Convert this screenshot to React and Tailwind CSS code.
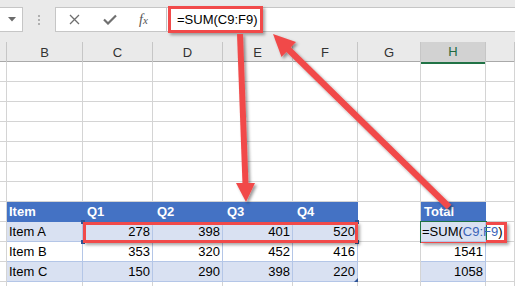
import React from 'react';

const COLS = 'grid-cols-[7px_76px_70px_70px_70px_65px_63px_65px_29px]';
const LETTERS = ['', 'B', 'C', 'D', 'E', 'F', 'G', 'H', ''];

const DATA = [
  ['Item A', 278, 398, 401, 520],
  ['Item B', 353, 320, 452, 416],
  ['Item C', 150, 290, 398, 220],
];
const TOTALS = [null, 1541, 1058];

function Cell({ children, className = '', line = 'border-[#d4d4d4]' }) {
  return (
    <div className={'h-[20px] border-r border-b flex items-center overflow-visible whitespace-nowrap ' + line + ' ' + className}>
      {children}
    </div>
  );
}

function EmptyRow() {
  return LETTERS.map((_, i) => <Cell key={i} />);
}

function Toolbar() {
  return (
    <div className="h-[42px] bg-[#eaeaea] flex items-start pt-[7px]">
      <div className="w-[23px] h-[25px] bg-white border border-l-0 border-[#c6c6c6] flex items-center justify-end pr-[6px]">
        <svg width="8" height="5" viewBox="0 0 8 5"><path d="M0 0h8L4 4.5z" fill="#6b6b6b" /></svg>
      </div>
      <div className="w-[32px] flex flex-col items-center gap-[2px] pt-[8px]">
        <span className="w-[2px] h-[2px] bg-[#b0b0b0]" />
        <span className="w-[2px] h-[2px] bg-[#b0b0b0]" />
        <span className="w-[2px] h-[2px] bg-[#b0b0b0]" />
      </div>
      <div className="flex-1 h-[25px] bg-white border border-r-0 border-[#c6c6c6] flex items-center">
        <div className="w-[111px] h-full flex items-center border-r border-[#c6c6c6]">
          <svg className="ml-[13px]" width="11" height="11" viewBox="0 0 11 11">
            <path d="M1 1l9 9M10 1l-9 9" stroke="#6e6e6e" strokeWidth="1.3" />
          </svg>
          <svg className="ml-[23px]" width="14" height="11" viewBox="0 0 14 11">
            <path d="M1 5.5l4 4L13 1.5" stroke="#707070" strokeWidth="2.2" fill="none" />
          </svg>
          <span className="ml-[22px] text-[14px] italic text-[#555] font-['Liberation_Serif',serif] leading-none">
            f<span className="text-[11px]">x</span>
          </span>
        </div>
        <span className="pl-[10px] text-[13px] text-black">=SUM(C9:F9)</span>
      </div>
    </div>
  );
}

function Headers() {
  return (
    <div className={'grid ' + COLS + ' h-[20px] bg-[#eaeaea] border-b border-[#a9a9a9]'}>
      {LETTERS.map((l, i) => (
        <div
          key={i}
          className={
            'flex items-center justify-center text-[13px] border-r border-[#c6c6c6] ' +
            (l === 'H' ? 'bg-[#d2d2d2] text-[#1e6b41] border-b-2 border-b-[#217346]' : 'text-[#333]')
          }
        >
          {l}
        </div>
      ))}
    </div>
  );
}

export default function App() {
  const head = 'bg-[#4472c4] text-white font-bold text-[13px]';
  return (
    <div className="relative w-[515px] h-[286px] overflow-hidden bg-white font-['Liberation_Sans',Arial,sans-serif]">
      <Toolbar />
      <Headers />
      <div className={'grid ' + COLS}>
        {[0, 1, 2, 3, 4, 5, 6].map(r => <EmptyRow key={r} />)}

        <Cell />
        {['Item', 'Q1', 'Q2', 'Q3', 'Q4'].map((h, i) => (
          <Cell key={h} line="border-[#4472c4]" className={head + ' ' + (i === 0 ? 'pl-[2px]' : 'pl-[4px]')}>
            {h}
          </Cell>
        ))}
        <Cell />
        <Cell line="border-[#4472c4]" className={head + ' pl-[3px]'}>Total</Cell>
        <Cell />

        {DATA.map((row, r) => {
          const band = r % 2 === 0 ? 'bg-[#d9e1f2]' : '';
          const line = 'border-[#b4c6e7]';
          return (
            <React.Fragment key={row[0]}>
              <Cell />
              <Cell line={line} className={band + ' pl-[2px] text-[13px]'}>{row[0]}</Cell>
              {row.slice(1).map((v, i) => (
                <Cell key={i} line={line} className={band + ' justify-end pr-[2px] text-[13px]'}>{v}</Cell>
              ))}
              <Cell />
              {TOTALS[r] === null ? (
                <Cell line={line} className={band + ' pl-[1px] text-[13px] relative z-10'}>
                  <span>=SUM(<span className="text-[#3b64b8]">C9:F9</span>)</span>
                </Cell>
              ) : (
                <Cell line={line} className={band + ' justify-end pr-[2px] text-[13px]'}>{TOTALS[r]}</Cell>
              )}
              <Cell />
            </React.Fragment>
          );
        })}
        <EmptyRow />
      </div>

      {/* range reference handles */}
      <span className="absolute left-[81px] top-[220px] w-[4px] h-[4px] bg-[#2f5597]" />
      <span className="absolute left-[81px] top-[240px] w-[4px] h-[4px] bg-[#2f5597]" />
      <span className="absolute left-[355px] top-[220px] w-[4px] h-[4px] bg-[#2f5597]" />
      <span className="absolute left-[355px] top-[240px] w-[4px] h-[4px] bg-[#2f5597]" />
      <span className="absolute left-[354px] top-[278px] w-0 h-0 border-l-[4px] border-l-transparent border-b-[4px] border-b-[#2f5597]" />

      {/* active cell */}
      <div className="absolute left-[420px] top-[221px] w-[67px] h-[22px] border-2 border-[#217346]" />

      {/* callout boxes */}
      <div className="absolute left-[168px] top-[6px] w-[95px] h-[27px] border-[3px] border-[#f14a4a] shadow-[2px_2px_3px_rgba(0,0,0,0.35)]" />
      <div className="absolute left-[83px] top-[222px] w-[275px] h-[21px] border-[3px] border-[#f14a4a] shadow-[2px_2px_3px_rgba(0,0,0,0.35)]" />
      <div className="absolute left-[421px] top-[222px] w-[86px] h-[21px] border-[3px] border-[#f14a4a] shadow-[2px_2px_3px_rgba(0,0,0,0.35)]" />

      <svg className="absolute inset-0 pointer-events-none" width="515" height="286">
        <defs>
          <filter id="sh" x="-20%" y="-20%" width="140%" height="140%">
            <feDropShadow dx="2" dy="2" stdDeviation="1.5" floodColor="#000" floodOpacity="0.4" />
          </filter>
        </defs>
        <g filter="url(#sh)" fill="#f14a4a" stroke="#f14a4a">
          <line x1="240" y1="34" x2="245.5" y2="185" strokeWidth="6" />
          <polygon points="236,183 255,183 246,202" stroke="none" />
          <line x1="288" y1="49" x2="449" y2="207" strokeWidth="6.5" />
          <polygon points="273,34 281.5,57 296,42" stroke="none" />
        </g>
      </svg>
    </div>
  );
}
